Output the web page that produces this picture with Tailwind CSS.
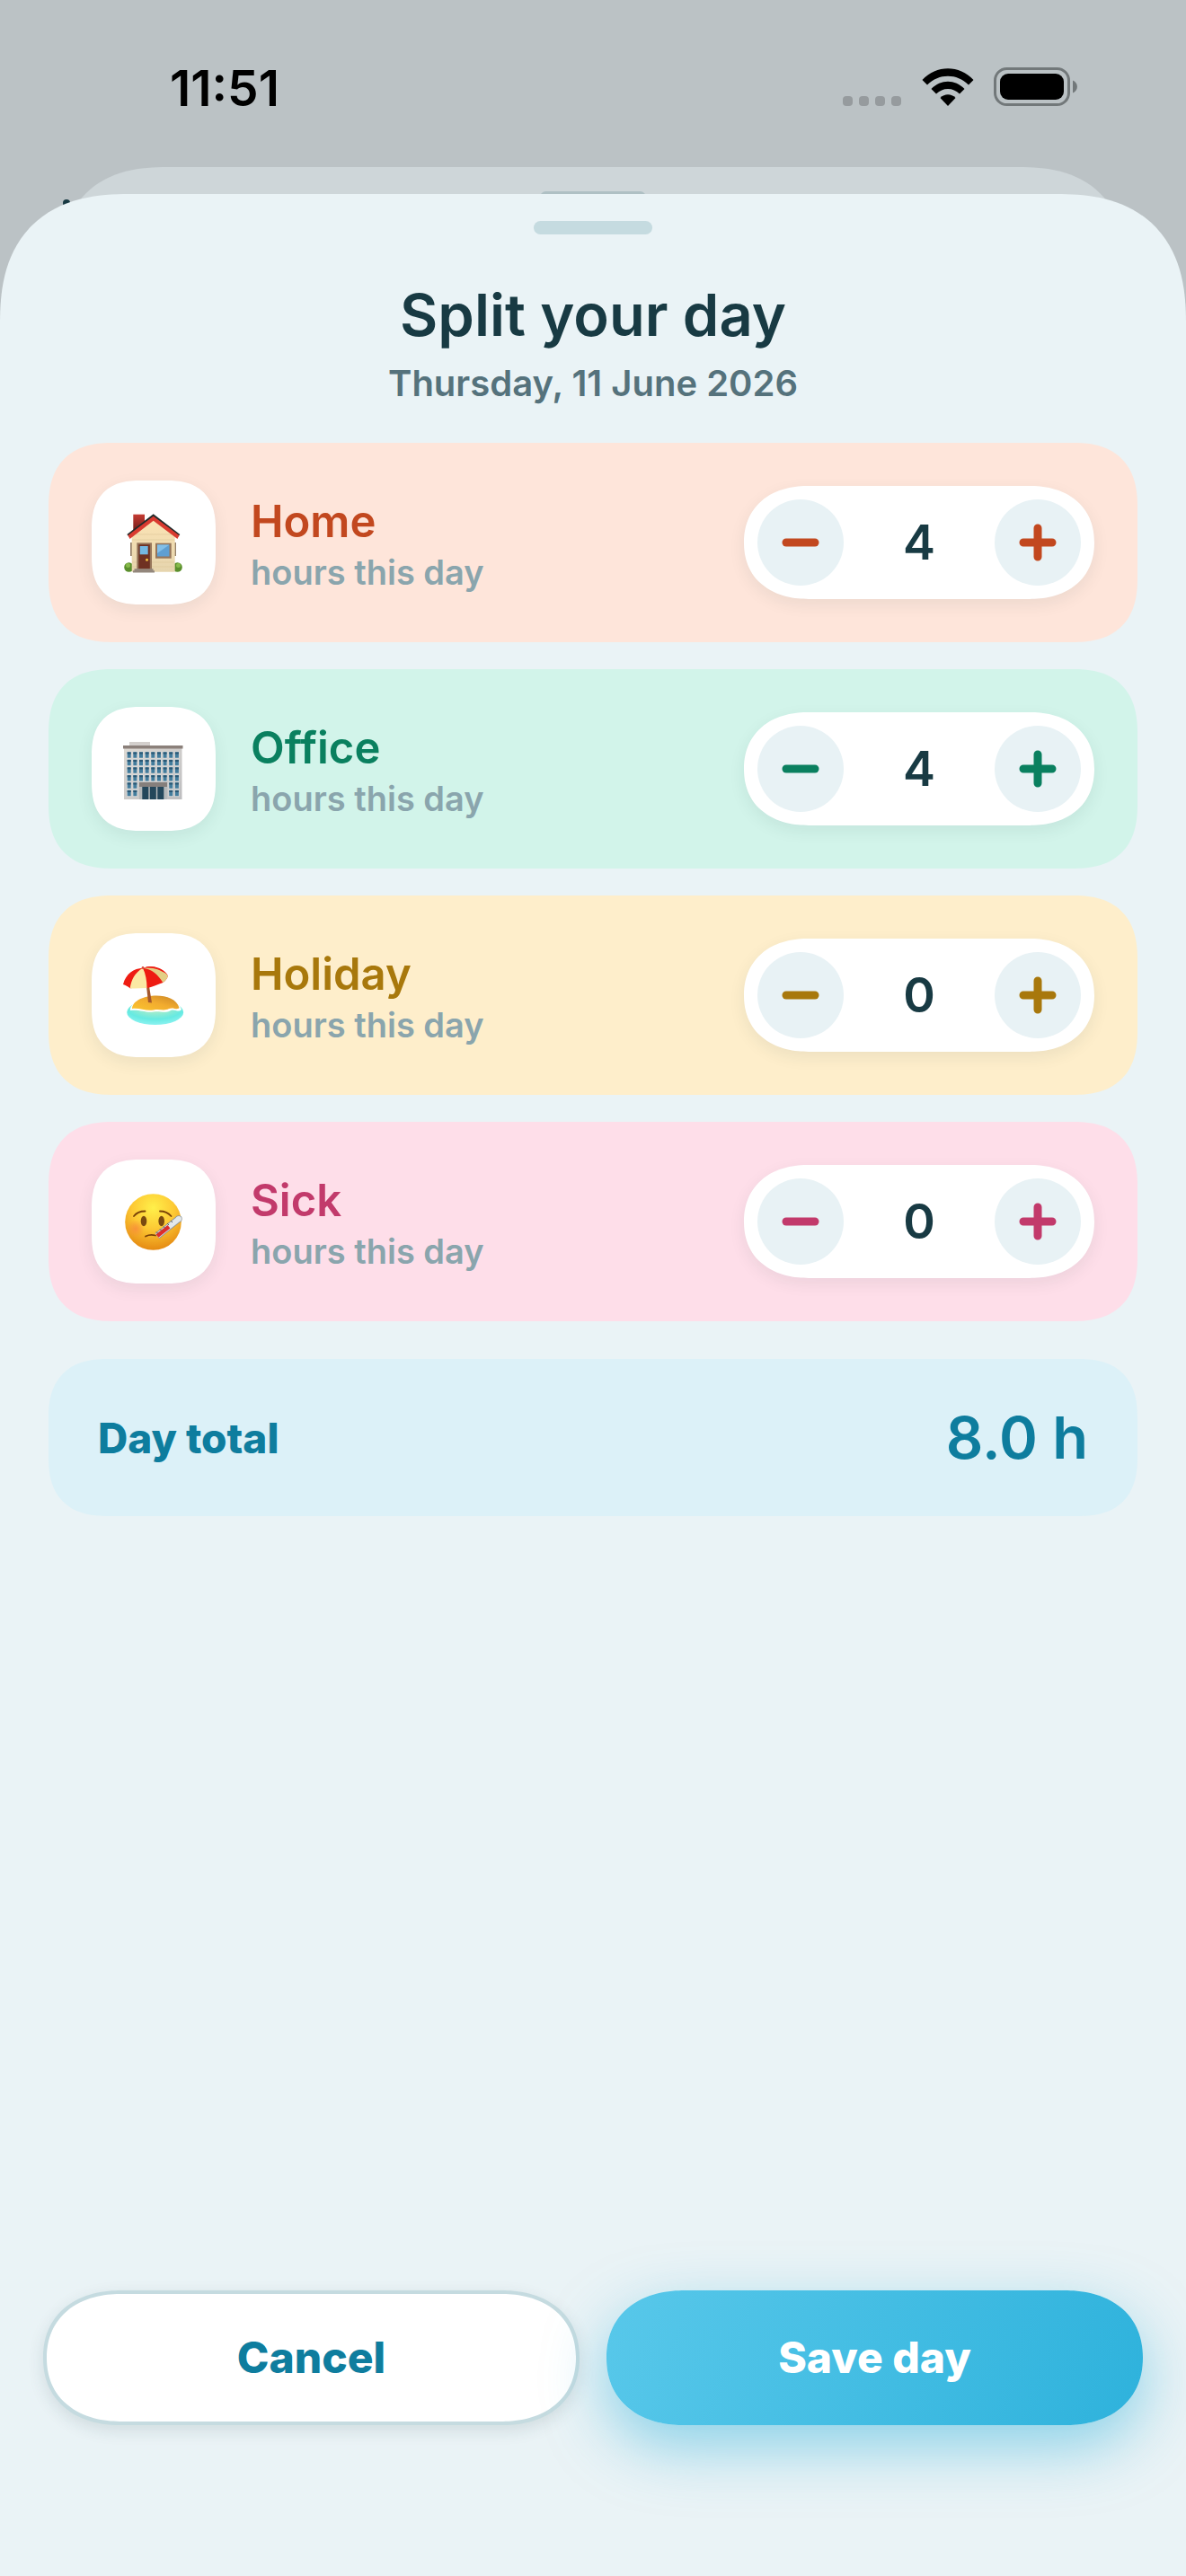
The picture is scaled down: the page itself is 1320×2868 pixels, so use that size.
<!DOCTYPE html>
<html lang="en">
<head>
  <meta charset="UTF-8">
  <meta name="viewport" content="width=device-width, initial-scale=1.0">
  <title>Split your day</title>
  <script src="https://cdn.jsdelivr.net/npm/@tailwindcss/browser@4"></script>
</head>
<body class="min-h-screen flex flex-col bg-[#bbc2c5] font-['Inter',sans-serif] text-[#183a43]">

  <!-- status bar -->
  <header class="h-[186px] flex items-start justify-between pl-[189px] pr-[120px] pt-[66px] text-black">
    <span class="text-[55px] leading-[64px] font-semibold">11:51</span>
    <div class="flex items-end pt-[9px]">
      <svg class="w-[66px] h-[12px] mr-[22px]" viewBox="0 0 66 12" fill="#969b9e">
        <rect x="0" y="0" width="11" height="11" rx="4" />
        <rect x="18" y="0" width="11" height="11" rx="4" />
        <rect x="36" y="0" width="11" height="11" rx="4" />
        <rect x="54" y="0" width="11" height="11" rx="4" />
      </svg>
      <svg class="w-[58px] h-[43px] mr-[22px]" viewBox="0 0 58 43">
        <path d="M0.500 13 C16 -4 42 -4 57.500 13 L52 18.500 C39 5.500 19 5.500 6 18.500 Z" />
        <path d="M10.500 23 C21 12 37 12 47.500 23 L42 28.500 C35 21 23 21 16 28.500 Z" />
        <path d="M20.500 33 C25 28 33 28 37.500 33 L29 42 Z" />
      </svg>
      <svg class="w-[94px] h-[44px]" viewBox="0 0 94 44">
        <rect x="1.500" y="1.500" width="82" height="40" rx="13" fill="none" stroke="#72787a" stroke-width="3" />
        <rect x="7" y="7" width="71" height="29" rx="9" />
        <path d="M88 14.500 C94.500 17 94.500 26 88 28.500 Z" fill="#72787a" />
      </svg>
    </div>
  </header>

  <!-- sheet underneath -->
  <div class="relative">
    <span class="absolute left-[70px] top-[36px] w-2 h-2 rounded-full bg-[#183a43]"></span>
    <div class="h-[120px] -mb-[90px] mx-[66px] pt-[27px] bg-[#ced6d9] rounded-t-[130px] [corner-shape:superellipse(1.3)]">
      <div class="w-[118px] h-[13px] mx-auto rounded-full bg-[#afc0c4]"></div>
    </div>
  </div>

  <main class="relative flex-1 flex flex-col pt-[30px] bg-[#eaf3f6] rounded-t-[144px] [corner-shape:superellipse(1.3)]">
    <div class="w-[132px] h-[15px] mx-auto rounded-full bg-[#c5dbe0]"></div>

    <div class="text-center mt-[48px]">
      <h1 class="text-[65px] leading-[84px] font-semibold">Split your day</h1>
      <p class="text-[40px] leading-[48px] mt-[10px] font-semibold text-[#55727c]">Thursday, 11 June 2026</p>
    </div>

    <ul class="flex flex-col gap-[30px] mt-[42px] px-[54px]">
      <li class="flex items-center h-[222px] px-[48px] rounded-[72px] [corner-shape:superellipse(1.3)] bg-[#fee5da] text-[#c2481f]">
        <div class="size-[138px] flex items-center justify-center rounded-[54px] [corner-shape:superellipse(1.3)] bg-white shadow-[0_6px_18px_rgba(24,58,67,0.08)]">
          <svg class="size-[68px]" viewBox="0 0 68 68">
            <defs>
              <linearGradient id="wall" x1="0" y1="0" x2="0" y2="1"><stop offset="0" stop-color="#fbe3b4" /><stop offset="1" stop-color="#e6d5ae" /></linearGradient>
              <linearGradient id="brick" x1="0" y1="0" x2="0" y2="1"><stop offset="0" stop-color="#c63b33" /><stop offset="1" stop-color="#6f1d1a" /></linearGradient>
            </defs>
            <rect x="11.300" y="2.700" width="12.700" height="19" fill="url(#brick)" />
            <path d="M8 34h2v15h-2zM57 34h2v15h-2z" fill="#96816a" />
            <circle cx="6.500" cy="61.500" r="5.300" fill="#5a8f2c" />
            <circle cx="60.500" cy="61.500" r="5.300" fill="#5a8f2c" />
            <circle cx="5.500" cy="59.500" r="2.500" fill="#86b94a" />
            <circle cx="61.500" cy="59.500" r="2.500" fill="#86b94a" />
            <path d="M9.700 27 L33.700 8 L57.700 27 V66.700 H9.700 Z" fill="url(#wall)" />
            <path d="M14 25h40M10 31h47M10 56h47M10 61h47" stroke="#dcc697" stroke-width="0.600" />
            <path d="M4.300 25 L33.700 2.300 L63.300 25 L61 28 L33.700 8 L7 28 Z" fill="#232b2b" />
            <path d="M5.500 26 L33.700 4.800 L62.300 26 L60.500 30 L33.700 9.800 L7.500 30 Z" fill="#d93a30" />
            <rect x="15.300" y="34.300" width="16.700" height="29.500" fill="#96755a" />
            <rect x="17.300" y="36.300" width="12.500" height="27" fill="#6f3122" />
            <rect x="18.700" y="38" width="9" height="9.300" fill="#74b8e2" />
            <circle cx="26.500" cy="53.300" r="1.500" fill="#f3c242" />
            <rect x="36" y="34.700" width="17.700" height="17" fill="#96755a" />
            <rect x="38" y="36.500" width="13.500" height="13" fill="#5f9fd2" />
            <path d="M38 36.500h13.500L38 46z" fill="#83bfe8" />
            <path d="M12.500 63.300h21v2h1.500v2.200h-24v-2.200h1.500z" fill="#93877c" />
          </svg>
        </div>
        <div class="ml-[39px] mt-[3px] flex-1">
          <h2 class="text-[49px] leading-[60px] font-semibold">Home</h2>
          <p class="text-[38px] leading-[48px] mt-[2px] font-semibold text-[#8aa5ad]">hours this day</p>
        </div>
        <div class="stepper w-[390px] flex items-center justify-between p-[15px] rounded-[72px/63px] [corner-shape:superellipse(1.15)] bg-white shadow-[0_6px_18px_rgba(24,58,67,0.08)]">
          <button type="button" aria-label="Less Home" data-step="-1" class="size-[96px] flex items-center justify-center rounded-full bg-[#e8f2f5]">
            <svg class="size-[42px]" viewBox="0 0 42 42" fill="none" stroke="currentColor" stroke-width="9" stroke-linecap="round"><path d="M5 21h32" /></svg>
          </button>
          <output class="text-[54px] leading-[64px] font-semibold text-[#183a43]">4</output>
          <button type="button" aria-label="More Home" data-step="1" class="size-[96px] flex items-center justify-center rounded-full bg-[#e8f2f5]">
            <svg class="size-[42px]" viewBox="0 0 42 42" fill="none" stroke="currentColor" stroke-width="9" stroke-linecap="round"><path d="M5 21h32M21 5v32" /></svg>
          </button>
        </div>
      </li>

      <li class="flex items-center h-[222px] px-[48px] rounded-[72px] [corner-shape:superellipse(1.3)] bg-[#d2f4ea] text-[#0a805f]">
        <div class="size-[138px] flex items-center justify-center rounded-[54px] [corner-shape:superellipse(1.3)] bg-white shadow-[0_6px_18px_rgba(24,58,67,0.08)]">
          <svg class="size-[68px]" viewBox="0 0 68 68">
            <defs>
              <linearGradient id="front" x1="0" y1="0" x2="1" y2="1"><stop offset="0" stop-color="#dedad4" /><stop offset="1" stop-color="#bdbdbf" /></linearGradient>
            </defs>
            <rect x="7" y="4" width="23" height="5" fill="#d3cfcc" />
            <rect x="1" y="10" width="64.500" height="58" fill="url(#front)" />
            <rect x="0" y="8" width="66.500" height="3.500" fill="#8b807a" />
            <g stroke="#dcdddd" stroke-width="8" stroke-dasharray="5.400 1.250">
              <path d="M4 18.500h60M4 27h60M4 35.500h60M4 44.200h60" />
              <path d="M4 52.500h13M4 61h13M50.550 52.500h13M50.550 61h13" />
            </g>
            <g stroke="#427c9c" stroke-width="6.500" stroke-dasharray="4 2.650">
              <path d="M4.700 18.500h58M4.700 27h58M4.700 35.500h58M4.700 44.200h58" />
              <path d="M4.700 52.500h11M4.700 61h11M51.250 52.500h11M51.250 61h11" />
            </g>
            <g stroke="#2b5874" stroke-width="2" stroke-dasharray="4 2.650">
              <path d="M4.700 16.500h58M4.700 25h58M4.700 33.500h58M4.700 42.200h58" />
              <path d="M4.700 50.500h11M4.700 59h11M51.250 50.500h11M51.250 59h11" />
            </g>
            <rect x="18" y="53" width="31" height="15" fill="#b4b8ba" />
            <path d="M21.300 54h7v14h-7zM29.800 54h7v14h-7zM38.300 54h7v14h-7z" fill="#24475b" />
            <rect x="18" y="49" width="31" height="5" fill="#857f7c" />
          </svg>
        </div>
        <div class="ml-[39px] mt-[3px] flex-1">
          <h2 class="text-[49px] leading-[60px] font-semibold">Office</h2>
          <p class="text-[38px] leading-[48px] mt-[2px] font-semibold text-[#8aa5ad]">hours this day</p>
        </div>
        <div class="stepper w-[390px] flex items-center justify-between p-[15px] rounded-[72px/63px] [corner-shape:superellipse(1.15)] bg-white shadow-[0_6px_18px_rgba(24,58,67,0.08)]">
          <button type="button" aria-label="Less Office" data-step="-1" class="size-[96px] flex items-center justify-center rounded-full bg-[#e8f2f5]">
            <svg class="size-[42px]" viewBox="0 0 42 42" fill="none" stroke="currentColor" stroke-width="9" stroke-linecap="round"><path d="M5 21h32" /></svg>
          </button>
          <output class="text-[54px] leading-[64px] font-semibold text-[#183a43]">4</output>
          <button type="button" aria-label="More Office" data-step="1" class="size-[96px] flex items-center justify-center rounded-full bg-[#e8f2f5]">
            <svg class="size-[42px]" viewBox="0 0 42 42" fill="none" stroke="currentColor" stroke-width="9" stroke-linecap="round"><path d="M5 21h32M21 5v32" /></svg>
          </button>
        </div>
      </li>

      <li class="flex items-center h-[222px] px-[48px] rounded-[72px] [corner-shape:superellipse(1.3)] bg-[#feeecb] text-[#a8780c]">
        <div class="size-[138px] flex items-center justify-center rounded-[54px] [corner-shape:superellipse(1.3)] bg-white shadow-[0_6px_18px_rgba(24,58,67,0.08)]">
          <svg class="size-[68px]" viewBox="0 0 68 68">
            <defs>
              <radialGradient id="sea" cx="0.500" cy="0.250" r="0.750"><stop offset="0" stop-color="#d5edb9" /><stop offset="0.700" stop-color="#66eae2" /><stop offset="1" stop-color="#8cf2f0" /></radialGradient>
              <linearGradient id="sand" x1="0" y1="1" x2="1" y2="0"><stop offset="0" stop-color="#fbc52e" /><stop offset="0.500" stop-color="#f2ac2f" /><stop offset="1" stop-color="#c98526" /></linearGradient>
            </defs>
            <ellipse cx="35.700" cy="53" rx="31.500" ry="14" fill="url(#sea)" />
            <path d="M8 51 C7 34 58 28 65 50 C61 54 58 49 53 51 C46 55 41 51 34 52.500 C25 54 20 50 8 51 Z" fill="#fff" />
            <path d="M10 49 C11 32 57 28 62.500 48 C60 51 56 47 51 49 C46 52 40 49 34 50.500 C25 52 19 48 10 49 Z" fill="url(#sand)" />
            <path d="M26 24 L28 42 L32 42.500 L29 24 Z" fill="#a4572c" />
            <path d="M0 22 C3 10 12 4 22 3.700 C33 0 46 4 50 12.500 C49 16 47 18 44.300 20 C38 22 32 25 27 26 C20 24 14 26 7.700 26.300 C5 24 3 23 0 22 Z" fill="#ee1c12" />
            <path d="M22 3.700 C13 9 9 17 7.700 26.300 C14 27 20 26 26.500 26 C26.500 18 25 10 22 3.700 Z" fill="#fbe9a4" />
            <path d="M22 3.700 C32 5 39 11 44.300 20 C47 18 49 16 50 12.500 C44 5 33 2 22 3.700 Z" fill="#e3cf85" />
            <path d="M24 3.500 C29 1 36 2 39 4.200 C43 5 45 7 46 9 C39 4 31 3 24 3.500 Z" fill="#ee1c12" />
            <circle cx="22" cy="3.500" r="1.400" fill="#d8483d" />
          </svg>
        </div>
        <div class="ml-[39px] mt-[3px] flex-1">
          <h2 class="text-[49px] leading-[60px] font-semibold">Holiday</h2>
          <p class="text-[38px] leading-[48px] mt-[2px] font-semibold text-[#8aa5ad]">hours this day</p>
        </div>
        <div class="stepper w-[390px] flex items-center justify-between p-[15px] rounded-[72px/63px] [corner-shape:superellipse(1.15)] bg-white shadow-[0_6px_18px_rgba(24,58,67,0.08)]">
          <button type="button" aria-label="Less Holiday" data-step="-1" class="size-[96px] flex items-center justify-center rounded-full bg-[#e8f2f5]">
            <svg class="size-[42px]" viewBox="0 0 42 42" fill="none" stroke="currentColor" stroke-width="9" stroke-linecap="round"><path d="M5 21h32" /></svg>
          </button>
          <output class="text-[54px] leading-[64px] font-semibold text-[#183a43]">0</output>
          <button type="button" aria-label="More Holiday" data-step="1" class="size-[96px] flex items-center justify-center rounded-full bg-[#e8f2f5]">
            <svg class="size-[42px]" viewBox="0 0 42 42" fill="none" stroke="currentColor" stroke-width="9" stroke-linecap="round"><path d="M5 21h32M21 5v32" /></svg>
          </button>
        </div>
      </li>

      <li class="flex items-center h-[222px] px-[48px] rounded-[72px] [corner-shape:superellipse(1.3)] bg-[#fedee9] text-[#c23a6b]">
        <div class="size-[138px] flex items-center justify-center rounded-[54px] [corner-shape:superellipse(1.3)] bg-white shadow-[0_6px_18px_rgba(24,58,67,0.08)]">
          <svg class="size-[68px]" viewBox="0 0 68 68">
            <defs>
              <radialGradient id="face" cx="0.500" cy="0.250" r="0.750"><stop offset="0" stop-color="#fff04a" /><stop offset="0.500" stop-color="#fdc934" /><stop offset="1" stop-color="#e58a12" /></radialGradient>
              <radialGradient id="blush"><stop offset="0" stop-color="#f98b3c" stop-opacity="0.800" /><stop offset="1" stop-color="#f98b3c" stop-opacity="0" /></radialGradient>
            </defs>
            <circle cx="33.500" cy="34.500" r="31.300" fill="url(#face)" />
            <circle cx="14" cy="42" r="10" fill="url(#blush)" />
            <ellipse cx="23" cy="33.500" rx="3.300" ry="5.700" fill="#7a4a10" />
            <ellipse cx="42.700" cy="33.500" rx="3.300" ry="5.700" fill="#7a4a10" />
            <path d="M12 28 C15 24 19 22.500 24.500 22.500M41 22.500 C46 22.500 50 24 53.500 28M25 50.500 C29 48.500 32 48.500 36 49.500" fill="none" stroke="#7a4208" stroke-width="1.800" stroke-linecap="round" />
            <path d="M38 50 L62 31" stroke="#8d9498" stroke-width="7.500" />
            <circle cx="62" cy="31" r="3.700" fill="#8d9498" />
            <path d="M38 50 L62 31" stroke="#e3e8ea" stroke-width="6" />
            <circle cx="62" cy="31" r="3" fill="#e3e8ea" />
            <path d="M38 50 L51 39.700" stroke="#df2b2b" stroke-width="4.500" />
            <path d="M37 45.500l2 2M41 42.500l2 2M45 39.500l2 2M49 36l2 2M53 33l2 2" stroke="#54595c" stroke-width="1" />
          </svg>
        </div>
        <div class="ml-[39px] mt-[3px] flex-1">
          <h2 class="text-[49px] leading-[60px] font-semibold">Sick</h2>
          <p class="text-[38px] leading-[48px] mt-[2px] font-semibold text-[#8aa5ad]">hours this day</p>
        </div>
        <div class="stepper w-[390px] flex items-center justify-between p-[15px] rounded-[72px/63px] [corner-shape:superellipse(1.15)] bg-white shadow-[0_6px_18px_rgba(24,58,67,0.08)]">
          <button type="button" aria-label="Less Sick" data-step="-1" class="size-[96px] flex items-center justify-center rounded-full bg-[#e8f2f5]">
            <svg class="size-[42px]" viewBox="0 0 42 42" fill="none" stroke="currentColor" stroke-width="9" stroke-linecap="round"><path d="M5 21h32" /></svg>
          </button>
          <output class="text-[54px] leading-[64px] font-semibold text-[#183a43]">0</output>
          <button type="button" aria-label="More Sick" data-step="1" class="size-[96px] flex items-center justify-center rounded-full bg-[#e8f2f5]">
            <svg class="size-[42px]" viewBox="0 0 42 42" fill="none" stroke="currentColor" stroke-width="9" stroke-linecap="round"><path d="M5 21h32M21 5v32" /></svg>
          </button>
        </div>
      </li>
    </ul>

    <div class="flex items-center justify-between h-[175px] mt-[42px] mx-[54px] px-[55px] rounded-[66px] [corner-shape:superellipse(1.3)] bg-[#dcf1f8] text-[#0e7d9e]">
      <span class="text-[46px] leading-[56px] font-extrabold">Day total</span>
      <span id="total" class="text-[65px] leading-[80px] font-semibold">8.0 h</span>
    </div>

    <div class="mt-auto grid grid-cols-2 gap-[30px] px-[48px] pt-[60px] pb-[168px]">
      <button type="button" class="h-[150px] rounded-[87px/75px] [corner-shape:superellipse(1.15)] border-4 border-[#c5dbe0] bg-white text-[48px] leading-[60px] font-extrabold text-[#0e7d9e] shadow-[0_6px_18px_rgba(24,58,67,0.12)]">Cancel</button>
      <button type="button" class="h-[150px] rounded-[87px/75px] [corner-shape:superellipse(1.15)] bg-linear-[110deg] from-[#58c8ea] to-[#2eb2dc] text-[48px] leading-[60px] font-extrabold text-white shadow-[0_24px_66px_rgba(46,178,220,0.5)]">Save day</button>
    </div>
  </main>

  <script>
    const totalElem = document.getElementById("total");
    const outputs = document.querySelectorAll(".stepper output");

    const updateTotal = () => {
      let sum = 0;
      outputs.forEach((o) => {
        sum += Number(o.textContent);
      });
      totalElem.innerText = sum.toFixed(1) + " h";
    };

    document.querySelectorAll(".stepper button").forEach((button) => {
      button.addEventListener("click", () => {
        const output = button.parentElement.querySelector("output");
        const next = Number(output.textContent) + Number(button.dataset.step);
        output.textContent = Math.min(24, Math.max(0, next));
        updateTotal();
      });
    });
  </script>
</body>
</html>
